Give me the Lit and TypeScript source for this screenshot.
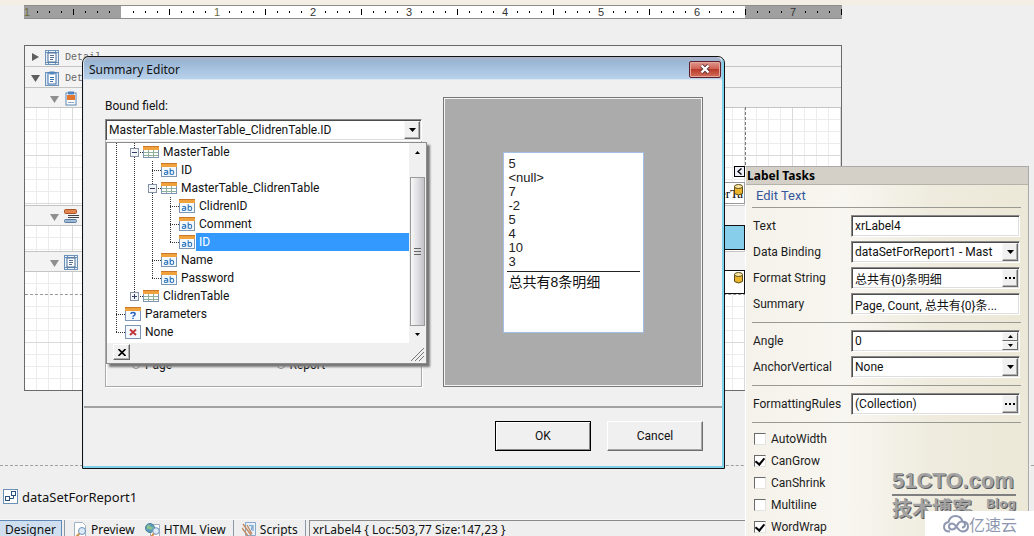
import { LitElement, html, svg, css, nothing, TemplateResult } from "lit";
import { customElement } from "lit/decorators.js";

type Guide = "v" | "t" | "l" | "minus" | "plus";
interface TreeRow { guides: Guide[]; icon: string; label: string; selected?: boolean; }

const TREE: TreeRow[] = [
  { guides: ["v", "minus"], icon: "table", label: "MasterTable" },
  { guides: ["v", "v", "t"], icon: "ab", label: "ID" },
  { guides: ["v", "v", "minus"], icon: "table", label: "MasterTable_ClidrenTable" },
  { guides: ["v", "v", "v", "t"], icon: "ab", label: "ClidrenID" },
  { guides: ["v", "v", "v", "t"], icon: "ab", label: "Comment" },
  { guides: ["v", "v", "v", "l"], icon: "ab", label: "ID", selected: true },
  { guides: ["v", "v", "t"], icon: "ab", label: "Name" },
  { guides: ["v", "v", "l"], icon: "ab", label: "Password" },
  { guides: ["v", "plus"], icon: "table", label: "ClidrenTable" },
  { guides: ["t"], icon: "param", label: "Parameters" },
  { guides: ["l"], icon: "none", label: "None" },
];

const frame = (body: TemplateResult | unknown, head = true) => svg`
  <rect x="0.5" y="1.5" width="15" height="13" fill="#f4f9fd" stroke="#7d96b4"/>
  ${head ? svg`<rect x="0" y="1" width="16" height="4" fill="#f0a23c"/><rect x="0" y="1" width="16" height="1" fill="#c9772a"/>` : nothing}
  ${body}`;

const ICONS: Record<string, unknown> = {
  table: svg`
    <rect x="0.5" y="2.5" width="15" height="11" fill="#fff" stroke="#8aa0b4"/>
    <rect x="0" y="2" width="16" height="4" fill="#f0a23c"/><rect x="0" y="2" width="16" height="1" fill="#c9772a"/>
    <path d="M5.5 6v8M10.5 6v8M0 8.5h16M0 11.5h16" stroke="#8fb09a" fill="none"/>
    <path d="M0.5 6v8M15.5 6v8M0 13.5h16" stroke="#7d96b4" fill="none"/>`,
  ab: frame(svg`
    <path d="M3.5 8.5h2.2q1 0 1 1v2.9M6.7 10.3h-2q-1.4 0-1.4 1.1t1.4 1.1q1.6 0 2-1M9.2 6.2v6.3M9.2 9.6q.5-1.2 1.8-1.2 1.7 0 1.7 2t-1.7 2.1q-1.3 0-1.8-1.2" stroke="#2f77bd" stroke-width="1.1" fill="none"/>`),
  param: frame(svg`<path d="M5.8 8q.2-1.5 2.1-1.5 2.2 0 2.2 1.6 0 1-1.2 1.6-.9.4-.9 1.1M8 11.7v1.4" stroke="#2462b8" stroke-width="1.5" fill="none"/>`),
  none: frame(svg`<path d="M5 5.5l6 5.5M11 5.5l-6 5.5" stroke="#c0383c" stroke-width="1.9" fill="none"/>`, false),
  page: svg`
    <rect x="0.5" y="0.5" width="13" height="14" fill="#e9f1f8" stroke="#6d93bb"/>
    <path d="M3.5 0v15M10.5 0v15M0 2.5h14M0 12.5h14" stroke="#6d93bb" fill="none"/>
    <rect x="3" y="3" width="8" height="9" fill="#fff" stroke="#4a6f98"/>
    <path d="M5 5.5h4M5 7.5h4M5 9.5h3" stroke="#55718f"/>`,
  report: svg`
    <rect x="0.5" y="1.5" width="13" height="13" fill="#dce9f5" stroke="#6d93bb"/>
    <rect x="3" y="2" width="8" height="11" fill="#fff" stroke="#3f73ab"/>
    <rect x="4.5" y="0.5" width="5" height="3" fill="#4f86bf"/>
    <path d="M5 6.5h4M5 8.5h4M5 10.5h3" stroke="#3f73ab"/>`,
  detail: svg`
    <rect x="2" y="2" width="10" height="12" fill="#fff" stroke="#5c86b4"/>
    <rect x="4" y="0.5" width="6" height="3" fill="#4f86bf"/>
    <rect x="3" y="4" width="8" height="5" fill="#e2762e"/>
    <path d="M4 11.5h6" stroke="#8aa6c4"/>`,
  group: svg`
    <rect x="0.5" y="0.5" width="12" height="4" rx="1" fill="#e2864e" stroke="#a9552a"/>
    <rect x="0.5" y="10.5" width="12" height="3" rx="1" fill="#9db8d4" stroke="#5d7c9c"/>
    <path d="M4 6.5h11M4 8.5h11" stroke="#444"/>`,
  schema: svg`
    <rect x="0.5" y="0.5" width="14" height="14" fill="#fff" stroke="#6c8fb5"/>
    <rect x="2.5" y="7.5" width="4" height="4" fill="#fff" stroke="#28517e"/>
    <rect x="8.5" y="2.5" width="4" height="4" fill="#fff" stroke="#28517e"/>
    <path d="M7 9.5h3.5V7" stroke="#28517e" fill="none"/>`,
  preview: svg`
    <path d="M1.5 .5h8l3 3v11h-11z" fill="#fff" stroke="#a3b2c2"/>
    <circle cx="9" cy="9" r="3.5" fill="#dcebf7" stroke="#6d93bb"/>
    <path d="M6.500 11.5L3 15" stroke="#d0904a" stroke-width="2"/>`,
  html: svg`
    <path d="M5.5 2.5h9v12h-9z" fill="#fff" stroke="#a3b2c2"/>
    <circle cx="5" cy="6" r="4.5" fill="#5d9db8" stroke="#4b8299"/>
    <path d="M2 4q2-2 3 0t3 1-2 3q-2-2-4-1z" fill="#8fc48d"/>
    <circle cx="11" cy="9" r="3.3" fill="#dcebf7" stroke="#6d93bb"/>
    <path d="M9 11.5L6 15" stroke="#d0904a" stroke-width="2"/>`,
  scripts: svg`
    <path d="M3.5 .5h10v13h-10z" fill="#e9f2fb" stroke="#8aa9c9"/>
    <path d="M7 4q3-2 3 1t-2 4M11 3v6" stroke="#5b8fc2" fill="none"/>
    <path d="M1 2l8 11M0 6l6 8M5 3l5 9" stroke="#c28a62" stroke-width="1.4" fill="none"/>`,
};

const icon = (name: string, w = 16, h = 16) =>
  html`<svg class="icon" width=${w} height=${h} viewBox="0 0 ${w} ${h}" aria-hidden="true">${ICONS[name]}</svg>`;

const down = html`<svg width="7" height="4" viewBox="0 0 7 4" aria-hidden="true"><path d="M0 0h7L3.5 4z" fill="#000"/></svg>`;
const up = html`<svg width="5" height="3" viewBox="0 0 5 3" aria-hidden="true"><path d="M0 3h5L2.5 0z" fill="#000"/></svg>`;
const downSmall = html`<svg width="5" height="3" viewBox="0 0 5 3" aria-hidden="true"><path d="M0 0h5L2.5 3z" fill="#000"/></svg>`;
const dots = html`<svg width="10" height="2" viewBox="0 0 10 2" aria-hidden="true"><path d="M0 0h2v2H0zM4 0h2v2H4zM8 0h2v2H8z" fill="#000"/></svg>`;
const database = html`<svg width="9" height="12" viewBox="0 0 9 12" aria-hidden="true"><path d="M.5 2.5v7q4 3 8 0v-7z" fill="#e8b52c" stroke="#5c4a1c"/><ellipse cx="4.5" cy="2.5" rx="4" ry="2" fill="#fbe9a0" stroke="#5c4a1c"/></svg>`;

const shared = css`
  * { box-sizing: border-box; }
  button, input, select { font: inherit; color: inherit; margin: 0; padding: 0; border: 0; border-radius: 0; background: none; }
  svg { display: block; flex: none; }
  .field {
    display: flex; height: 22px; background: #fff; color: #111;
    border: 1px solid #fff; border-top-color: #8a8a8a; border-left-color: #8a8a8a;
    box-shadow: inset 1px 1px #4c4c4c, inset -1px -1px #dedede;
    padding: 1px 1px 1px 2px;
  }
  .field input, .field select { flex: 1; min-width: 0; width: 0; appearance: none; padding-left: 1px; outline: none; text-overflow: ellipsis; }
  .field select { text-overflow: clip; overflow: hidden; }
  .knob {
    flex: none; width: 16px; display: grid; place-items: center; background: #f0f0f0;
    border: 1px solid #f8f8f8; border-right-color: #6a6a6a; border-bottom-color: #6a6a6a;
    box-shadow: inset -1px -1px #b0b0b0;
  }
`;

@customElement("report-ruler")
class ReportRuler extends LitElement {
  static styles = css`
    :host { display: block; height: 14px; }
    svg { display: block; }
    text { font: 11px "Liberation Sans", sans-serif; text-anchor: middle; fill: #333; }
    .faded { fill: #6b6b3c; }
    .edge { text-anchor: start; }
  `;
  render() {
    const marks: unknown[] = [];
    for (let i = 0; i < 68; i++) {
      const x = 1 + i * 12;
      if (i % 8 === 0) {
        const n = Math.abs(i / 8 - 1);
        if (n) marks.push(svg`<text class=${i === 0 ? "faded edge" : n === 1 ? "faded" : ""} x=${i === 0 ? 0 : x} y="11">${n}</text>`);
      } else if (i % 4 === 0) marks.push(svg`<rect x=${x} y="4" width="1" height="6"/>`);
      else marks.push(svg`<rect x=${x} y="6" width="1" height="2"/>`);
    }
    return html`<svg width="100%" height="14" role="img" aria-label="Ruler">
      <rect width="818" height="14" fill="#fff"/>
      <rect width="97" height="14" fill="#a0a0a0"/><rect x="721" width="97" height="14" fill="#a0a0a0"/>
      <path d="M0 .5H818M0 13.5H818" stroke="#8d8d8d"/>
      ${marks}<rect x="721" y="4" width="1" height="6"/><rect x="817" y="4" width="1" height="6"/>
    </svg>`;
  }
}

@customElement("report-surface")
class ReportSurface extends LitElement {
  static styles = [shared, css`
    :host { display: block; position: relative; height: 346px; border: 1px solid #6a6a6a; background: #fff; }
    .page { display: flex; flex-direction: column; height: 100%; }
    .band {
      display: flex; align-items: center; gap: 5px; height: 21px; padding: 2px 0 0 6px;
      background: #f3f3f3; border-bottom: 1px solid #c4c4c4; color: #666;
      font: 10px "Liberation Mono", monospace;
    }
    .nested { padding-left: 25px; height: 20px; }
    .ruled { border-top: 1px solid #c4c4c4; height: 21px; }
    .grid {
      background-color: #fff;
      background-image:
        repeating-linear-gradient(90deg, transparent 0 47px, #dadada 47px 48px),
        repeating-linear-gradient(180deg, transparent 0 47px, #dadada 47px 48px),
        repeating-linear-gradient(90deg, transparent 0 11px, #ececec 11px 12px),
        repeating-linear-gradient(180deg, transparent 0 11px, #ececec 11px 12px);
    }
    .h98 { height: 97px; } .h25 { height: 25px; } .rest { flex: 1; }
    .foot { height: 23px; border-bottom: 1px dashed #999; }
    .margin { position: absolute; top: 61px; bottom: 0; left: 720px; border-left: 1px dashed #777; }
    .cell { position: absolute; right: 96px; width: 147px; height: 22px; border: 1px solid #9a9a9a; background: #fff; display: flex; justify-content: flex-end; padding: 3px 1px 0; font: 13px "Liberation Serif", serif; color: #000; }
    .bound { top: 136px; }
    .active { top: 179px; height: 25px; background: #87ceeb; border-color: #111; }
    .total { top: 224px; height: 24px; border-color: #111; }
    .db { position: absolute; right: 1px; top: 1px; }
    .tag { position: absolute; left: 709px; top: 120px; width: 11px; height: 11px; border: 1px solid #000; background: #eef0fb; display: grid; place-items: center; }
  `];
  band(glyph: string, open: boolean, cls = "", text = "") {
    return html`<div class="band ${cls}">
      <svg width="9" height="8" viewBox="0 0 9 8" aria-hidden="true"><path d=${open ? "M0 1h9L4.5 8z" : "M1 0v8l7-4z"} fill=${cls ? "#8f8f8f" : "#5f5f5f"}/></svg>
      ${icon(glyph, 15, 15)}${text ? html`<span>${text}</span>` : nothing}</div>`;
  }
  render() {
    return html`<div class="page">
      ${this.band("page", false, "", "Detail")}
      ${this.band("report", true, "", "Det")}
      ${this.band("detail", true, "nested")}
      <div class="grid h98"></div>
      ${this.band("group", true, "nested ruled")}
      <div class="grid h25"></div>
      ${this.band("page", true, "nested ruled")}
      <div class="grid foot"></div>
      <div class="grid rest"></div>
    </div>
    <div class="margin"></div>
    <div class="cell bound">erTa<span class="db">${database}</span></div>
    <div class="cell active"></div>
    <div class="cell total"><span class="db">${database}</span></div>
    <button class="tag" aria-label="Label tasks"><svg width="5" height="7" viewBox="0 0 5 7"><path d="M4.5 .5l-3.5 3 3.5 3" stroke="#000" stroke-width="1.4" fill="none"/></svg></button>`;
  }
}

@customElement("field-tree")
class FieldTree extends LitElement {
  static styles = [shared, css`
    :host { display: block; background: #fff; border: 1px solid #8c8c8c; box-shadow: 3px 3px 2px #777; }
    .list { display: flex; }
    .rows { flex: 1; margin: 0; padding: 0 0 2px; list-style: none; }
    .row { display: flex; height: 18px; align-items: center; }
    .text { flex: 1; margin-left: 1px; padding-left: 3px; line-height: 18px; }
    .selected { background: #3399ff; color: #fff; }
    .bar { width: 17px; display: flex; flex-direction: column; align-items: center; background: #f0f0f0; }
    .step { height: 34px; width: 100%; display: grid; justify-items: center; padding-top: 8px; }
    .step.end { height: 17px; padding-top: 7px; }
    .thumb { flex: 1; width: 15px; border: 1px solid #9a9a9a; background: linear-gradient(90deg, #f8f8f8, #e2e2e6 45%, #c2c2c8); display: grid; place-items: center; }
    .foot { display: flex; justify-content: space-between; height: 20px; background: #f0f0f0; padding: 1px 2px 2px 6px; }
    .close { width: 17px; height: 16px; display: grid; place-items: center; background: #f0f0f0; border: 1px solid #fff; border-right-color: #666; border-bottom-color: #666; box-shadow: inset -1px -1px #b0b0b0; }
    .grip { align-self: flex-end; }
  `];
  guide(g: Guide) {
    const box = g === "minus" || g === "plus";
    const end = g === "l" || g === "plus" ? 9 : 18;
    return html`<svg width="18" height="18" viewBox="0 0 18 18" aria-hidden="true">
      <path d="M9.5 0V${end}" stroke="#333" stroke-dasharray="1 1"/>
      ${g !== "v" ? svg`<path d="M9 9.5H18" stroke="#333" stroke-dasharray="1 1"/>` : nothing}
      ${box ? svg`<rect x="5.5" y="5.5" width="8" height="8" fill="#f4f6fa" stroke="#8492a6"/>
        <path d=${g === "plus" ? "M7 9.5h5M9.5 7v5" : "M7 9.5h5"} stroke="#333c66"/>` : nothing}
    </svg>`;
  }
  render() {
    return html`<div class="list">
      <ul class="rows" role="tree">
        ${TREE.map(r => html`<li class="row" role="treeitem" aria-selected=${r.selected ? "true" : "false"}>
          ${r.guides.map(g => this.guide(g))}${icon(r.icon)}
          <span class="text ${r.selected ? "selected" : ""}">${r.label}</span></li>`)}
      </ul>
      <div class="bar">
        <div class="step">${up}</div>
        <div class="thumb"><svg width="7" height="7" viewBox="0 0 7 7"><path d="M0 .5h7M0 3.5h7M0 6.5h7" stroke="#666"/></svg></div>
        <div class="step end">${downSmall}</div>
      </div>
    </div>
    <div class="foot">
      <button class="close" aria-label="Close list"><svg width="8" height="7" viewBox="0 0 8 7"><path d="M.5 0l7 7M7.5 0l-7 7" stroke="#000" stroke-width="1.6"/></svg></button>
      <svg class="grip" width="14" height="14" viewBox="0 0 14 14" aria-hidden="true"><path d="M1 14L14 1M5 14l9-9M9 14l5-5" stroke="#777"/></svg>
    </div>`;
  }
}

@customElement("summary-dialog")
class SummaryDialog extends LitElement {
  static styles = [shared, css`
    :host { display: flex; flex-direction: column; background: #f0f0f0; border: 1px solid #111; border-radius: 7px 7px 0 0; box-shadow: inset -2px -2px #7fd0ea, inset 1px 0 #dfe9f3; padding: 0 2px 2px 1px; color: #111; }
    .title { display: flex; align-items: center; height: 23px; padding: 2px 1px 0 5px; border-radius: 6px 6px 0 0; background: linear-gradient(#a9b3cb 0 2px, #98b5d3 4px, #b9d2ec); border-bottom: 1px solid #dbe8f4; font: 12px "Noto Sans", sans-serif; }
    .title h1 { flex: 1; margin: 0; font: inherit; }
    .x { width: 32px; height: 17px; display: grid; place-items: center; border: 1px solid #5d2028; border-radius: 2px; background: linear-gradient(#e0978c, #cf6254 45%, #b93a2a 50%, #d3705c); box-shadow: inset 0 0 0 1px #e3a79d; }
    .main { flex: 1; display: grid; grid-template-columns: 317px 1fr; gap: 21px; padding: 17px 19px 19px 21px; }
    .left { display: flex; flex-direction: column; position: relative; }
    .left label { line-height: 18px; margin-bottom: 4px; }
    .group { flex: 1; display: flex; align-items: flex-end; border: 1px solid #a8a8a8; border-top: 0; margin: 0; padding: 0 0 12px 26px; min-width: 0; box-shadow: inset 1px 0 #fff, 1px 1px #fff; }
    .group label { flex: 1; display: flex; align-items: center; gap: 5px; margin: 0; line-height: 18px; }
    .group input { appearance: none; width: 8px; height: 8px; border: 1px solid #888; border-radius: 50%; background: #fff; }
    .drop { position: absolute; left: 1px; top: 45px; width: 321px; }
    .preview { display: grid; place-items: center; background: #ababab; border: 1px solid #777; box-shadow: inset 0 0 0 1px #f4f4f4; }
    .paper { width: 141px; height: 181px; background: #fff; border: 1px solid #a3bfe6; padding: 4px 3px; }
    .values { margin: 0; padding: 0 0 2px 2px; list-style: none; font: 13px/14px "Liberation Sans", sans-serif; color: #222; }
    .sum { margin: 0; border-top: 1px solid #222; padding-left: 2px; font: 14px/20px "Liberation Sans", "Noto Sans CJK SC", sans-serif; }
    .actions { display: flex; justify-content: flex-end; gap: 16px; padding: 13px 19px 15px; border-top: 2px solid #a2a2a2; }
    .btn { width: 96px; height: 30px; border: 1px solid #fff; border-right-color: #6e6e6e; border-bottom-color: #6e6e6e; box-shadow: inset -1px -1px #a8a8a8; }
    .default { border: 1px solid #000; box-shadow: inset 1px 1px #fff, inset -1px -1px #888; }
  `];
  render() {
    return html`
      <header class="title"><h1>Summary Editor</h1>
        <button class="x" aria-label="Close"><svg width="12" height="10" viewBox="0 0 12 10"><path d="M2.5 1.500l7 7M9.500 1.500l-7 7" stroke="#5b3038" stroke-width="4"/><path d="M2.5 1.500l7 7M9.500 1.500l-7 7" stroke="#fff" stroke-width="2.400"/></svg></button>
      </header>
      <div class="main">
        <div class="left">
          <label for="bound">Bound field:</label>
          <div class="field"><input id="bound" value="MasterTable.MasterTable_ClidrenTable.ID"><button class="knob" aria-label="Open list">${down}</button></div>
          <fieldset class="group">
            <label><input type="radio" name="scope">Page</label>
            <label><input type="radio" name="scope">Report</label>
          </fieldset>
          <field-tree class="drop"></field-tree>
        </div>
        <div class="preview"><div class="paper">
          <ul class="values">${["5", "<null>", "7", "-2", "5", "4", "10", "3"].map(v => html`<li>${v}</li>`)}</ul>
          <p class="sum">总共有8条明细</p>
        </div></div>
      </div>
      <footer class="actions"><button class="btn default">OK</button><button class="btn">Cancel</button></footer>`;
  }
}

@customElement("label-tasks")
class LabelTasks extends LitElement {
  static styles = [shared, css`
    :host { display: block; border: 1px solid #aaa; border-left-color: #fff; border-bottom: 0; color: #1c1c1c; background: linear-gradient(90deg, #f4f2ea, #f8f6f0 35%, #efecdf 65%, #ebe8d7); }
    h2 { margin: 0; height: 18px; padding-left: 1px; background: #d4d0c8; border-bottom: 1px solid #b5b2aa; font: bold 12px/17px "Noto Sans", sans-serif; color: #000; }
    .body { padding: 0 7px 0 6px; }
    .edit { display: block; padding: 2px 4px; height: 22px; line-height: 18px; color: #35579c; text-decoration: none; font-size: 13px; }
    .rows { display: grid; gap: 4px; padding: 7px 1px; border-top: 1px solid #9a9a94; }
    .row { display: grid; grid-template-columns: 98px 1fr; align-items: center; }
    .row label { line-height: 22px; }
    .spin { width: 16px; display: grid; grid-template-rows: 1fr 1fr; }
    .spin button { display: grid; place-items: center; background: #f0f0f0; border: 1px solid #fafafa; border-right-color: #6a6a6a; border-bottom-color: #6a6a6a; }
    .checks { display: flex; flex-direction: column; border-top: 1px solid #9a9a94; padding: 5px 2px; }
    .check { display: flex; align-items: center; gap: 5px; height: 22px; }
    .check input { appearance: none; width: 12px; height: 12px; background: #fff; border: 1px solid #e4e4e0; border-top-color: #6a6a6a; border-left-color: #6a6a6a; display: grid; place-items: center; }
    .check input:checked::after { content: ""; width: 4px; height: 7px; border: solid #000; border-width: 0 2px 2px 0; transform: rotate(40deg); margin-bottom: 2px; }
  `];
  text(id: string, label: string, value: string, more = false) {
    return html`<div class="row"><label for=${id}>${label}</label><div class="field"><input id=${id} .value=${value}>
      ${more ? html`<button class="knob" aria-label="More">${dots}</button>` : nothing}</div></div>`;
  }
  pick(id: string, label: string, value: string) {
    return html`<div class="row"><label for=${id}>${label}</label><div class="field"><select id=${id}><option>${value}</option></select><span class="knob">${down}</span></div></div>`;
  }
  check(label: string, on: boolean) {
    return html`<label class="check"><input type="checkbox" ?checked=${on}>${label}</label>`;
  }
  render() {
    return html`<h2>Label Tasks</h2>
    <div class="body">
      <a class="edit" href="#">Edit Text</a>
      <div class="rows">
        ${this.text("text", "Text", "xrLabel4")}
        ${this.pick("binding", "Data Binding", "dataSetForReport1 - Mast")}
        ${this.text("format", "Format String", "总共有{0}条明细", true)}
        ${this.text("summary", "Summary", "Page, Count, 总共有{0}条...")}
      </div>
      <div class="rows">
        <div class="row"><label for="angle">Angle</label><div class="field"><input id="angle" value="0">
          <span class="spin"><button aria-label="Up">${up}</button><button aria-label="Down">${downSmall}</button></span></div></div>
        ${this.pick("anchor", "AnchorVertical", "None")}
      </div>
      <div class="rows">${this.text("rules", "FormattingRules", "(Collection)", true)}</div>
      <div class="checks">
        ${this.check("AutoWidth", false)}${this.check("CanGrow", true)}${this.check("CanShrink", false)}
        ${this.check("Multiline", false)}${this.check("WordWrap", true)}
      </div>
    </div>`;
  }
}

@customElement("app-root")
class AppRoot extends LitElement {
  static styles = [shared, css`
    :host { display: flex; flex-direction: column; position: relative; height: 100vh; overflow: hidden; background: #efefef; color: #111; font: 12px Roboto, "Noto Sans CJK SC", sans-serif; }
    .top { height: 5px; background: #f4efe4; flex: none; }
    .work { flex: 1; width: 842px; padding-left: 24px; min-height: 0; }
    .sheet { margin-top: 26px; }
    .tray { height: 54px; flex: none; display: flex; align-items: center; gap: 4px; padding: 8px 3px 0; border-top: 1px dashed #a0a0a0; font: 13px "Noto Sans", sans-serif; }
    .tabs { display: flex; height: 17px; flex: none; font: 12px/18px "Noto Sans", sans-serif; border-top: 1px solid #f8f8f8; overflow: hidden; }
    .tab { display: flex; align-items: center; gap: 3px; height: 19px; line-height: 18px; padding: 0 5px; white-space: nowrap; }
    .on { width: 62px; border: 1px solid #5f88b8; border-left: 0; background: #cfdff0; }
    .sep { width: 1px; background: #8b98a8; margin: 0 3px 0 2px; flex: none; }
    .status { flex: 1; height: 19px; line-height: 18px; border: 1px solid #8a8a8a; padding-left: 3px; }
    .dialog { position: absolute; left: 82px; top: 56px; width: 643px; height: 413px; }
    .tasks { position: absolute; left: 745px; top: 166px; bottom: 0; width: 284px; }
    .mark { position: absolute; right: 18px; bottom: 16px; width: 124px; color: #a2a2a2; text-shadow: 1px 1px #5c5c5c; }
    .brand { display: block; font: bold 22px/26px "Liberation Sans", sans-serif; border-bottom: 2px solid #808080; }
    .sub { display: flex; justify-content: space-between; font: bold 20px/24px "Noto Sans CJK SC", sans-serif; }
    .blog { font: bold 12px/16px "DejaVu Sans", sans-serif; }
    .cloud { position: absolute; right: 0; bottom: 0; width: 109px; height: 25px; background: #fff; color: #8f98b0; display: flex; align-items: center; padding-left: 18px; font: 16px/24px "Noto Sans CJK SC", sans-serif; }
  `];
  render() {
    return html`
      <div class="top"></div>
      <div class="work"><report-ruler></report-ruler><report-surface class="sheet"></report-surface></div>
      <div class="tray">${icon("schema", 15, 15)}<span>dataSetForReport1</span></div>
      <nav class="tabs">
        <button class="tab on">Designer</button><span class="sep"></span>
        <button class="tab">${icon("preview", 15, 16)}Preview</button>
        <button class="tab">${icon("html")}HTML View</button><span class="sep"></span>
        <button class="tab">${icon("scripts", 15, 16)}Scripts</button><span class="sep"></span>
        <div class="status">xrLabel4 { Loc:503,77 Size:147,23 }</div>
      </nav>
      <summary-dialog class="dialog" role="dialog" aria-label="Summary Editor"></summary-dialog>
      <label-tasks class="tasks"></label-tasks>
      <div class="mark"><span class="brand">51CTO.com</span><div class="sub">技术博客<span class="blog">Blog</span></div></div>
      <div class="cloud"><svg width="26" height="18" viewBox="0 0 26 18" fill="none" stroke="#8f98b0" stroke-width="2" aria-hidden="true"><path d="M7 16.5q-6 0-6-4.5 0-4 4.5-5Q7 1 12.5 1t7 5.5q5.5.5 5.5 5t-5 5q-3 0-6-4t-5-4q-3 0-3 3t3 3 5-4 4.500-4q3.500 0 3.500 3t-3 3"/></svg>亿速云</div>`;
  }
}
